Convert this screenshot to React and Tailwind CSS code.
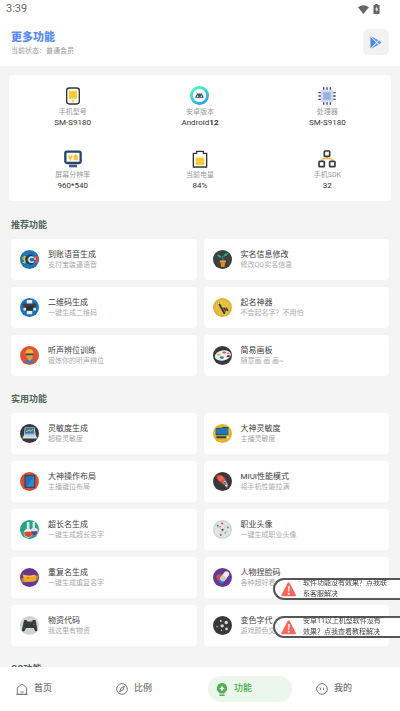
import { useState } from "react";

// Round 56x56 badge that every feature icon sits in
function Badge({ color, children }) {
  return (
    <svg viewBox="0 0 56 56" className="w-[19px] h-[19px] rounded-full shrink-0" aria-hidden="true">
      <rect width="56" height="56" fill={color} />
      {children}
    </svg>
  );
}

const icons = {
  voice: (
    <Badge color="#1f74b8">
      <path d="M18 21q-9-3-10 3 0 4 5 5t4 5q-2 4-9 2M13 17v23" fill="none" stroke="#e6c92f" strokeWidth="3" />
      <path d="M38 19a12 12 0 1 0 0 19" fill="none" stroke="#30343c" strokeWidth="5" />
      <path d="M40 23a8 8 0 1 0 0 11" fill="none" stroke="#e9eef2" strokeWidth="4" />
      <path d="M41 20l12-2v16l-4 8-4-8z" fill="#dd4a3b" />
      <path d="M41 23h6v6h-6z" fill="#f1b3a6" />
    </Badge>
  ),
  qrcode: (
    <Badge color="#1c73b9">
      <path d="M20 6h16v12H20z" fill="#e6eaec" />
      <path d="M9 16h38v18H9z" fill="#3c3f42" />
      <path d="M17 24h22v13H17z" fill="#2c2e31" />
      <path d="M10 29h8v8h-8zM39 29h8v8h-8z" fill="#dfe4e8" />
      <path d="M20 38h16v10H20z" fill="#e6eaec" />
    </Badge>
  ),
  listen: (
    <Badge color="#df5236">
      <path d="M17 50V43q3-7 11-7t12 7v7z" fill="#2d7fc1" />
      <path d="M19 22h19v10q-2 9-9 12-8-3-10-12z" fill="#e99a3c" />
      <path d="M16 23q0-14 12-14t12 14z" fill="#f0b32e" />
      <path d="M17 22h23v5H17z" fill="#2e4c5e" />
    </Badge>
  ),
  plant: (
    <Badge color="#3d4041">
      <path d="M29 35V18" stroke="#1fa081" strokeWidth="3" />
      <path d="M26 23q-11 1-14-9 12-1 14 9zM31 19q2-11 14-10-2 11-14 10z" fill="#22ab8b" />
      <path d="M20 31h18v6H20z" fill="#f5a62e" />
      <path d="M22 37h14l-2 13H24z" fill="#e7871f" />
    </Badge>
  ),
  naming: (
    <Badge color="#dfb433">
      <circle cx="28" cy="28" r="22" fill="#e6bf43" />
      <path d="M13 14l5-2 19 33-5 3z" fill="#35373b" />
      <path d="M13 14l5-2 2 5-5 2z" fill="#f0e6c3" />
      <path d="M31 28l7 11M38 29l6 9" stroke="#4b4633" strokeWidth="5" />
    </Badge>
  ),
  palette: (
    <Badge color="#37393c">
      <ellipse cx="29" cy="28" rx="24" ry="15" transform="rotate(-10 29 28)" fill="#eceff1" />
      <ellipse cx="17" cy="26" rx="6" ry="3" fill="#efaa2c" />
      <ellipse cx="33" cy="19" rx="6" ry="3" fill="#e2523d" />
      <ellipse cx="26" cy="34" rx="6" ry="4" fill="#2e86c6" />
      <ellipse cx="45" cy="30" rx="5" ry="3" fill="#323539" />
      <ellipse cx="45" cy="22" rx="4" ry="2" fill="#e2523d" />
    </Badge>
  ),
  laptop: (
    <Badge color="#35383c">
      <path d="M14 10h29l3 21H12z" fill="#dfe5e9" />
      <path d="M16 12h25l2 17H14z" fill="#2779bd" />
      <path d="M18 23l9-5 4 3 8-5" fill="none" stroke="#e4b13a" strokeWidth="3" />
      <path d="M12 31h34l5 12H7z" fill="#dde1e3" />
      <path d="M15 34h27l2 3H13z" fill="#bcc3c8" />
    </Badge>
  ),
  tablet: (
    <Badge color="#d94c32">
      <rect x="13" y="8" width="32" height="39" rx="3" fill="#35475a" />
      <path d="M17 12h24v31H17z" fill="#1f72b7" />
      <path d="M41 12v31H20z" fill="#2f89cd" />
    </Badge>
  ),
  flask: (
    <Badge color="#25a384">
      <path d="M20 6h8v25h-8zM37 6h7v22h-7z" fill="#dceee9" />
      <circle cx="24" cy="39" r="13" fill="#e8efed" />
      <circle cx="42" cy="34" r="11" fill="#d9e4e4" />
      <path d="M32 33h20q0 12-11 12-8-2-9-12z" fill="#6c3a94" />
      <path d="M12 37q12-6 24 1 0 12-12 12-12-1-12-13z" fill="#df4836" />
    </Badge>
  ),
  monitor: (
    <Badge color="#e0b42c">
      <path d="M27 9h18v6H27z" fill="#3c4652" />
      <path d="M8 12l37-2v23H8z" fill="#33495c" />
      <path d="M9 14l35-2v19L9 29z" fill="#1f78bd" />
      <path d="M10 36h29v6H10z" fill="#383c40" />
      <path d="M41 35h5v7h-5z" fill="#f2f2ea" />
    </Badge>
  ),
  rocket: (
    <Badge color="#36393b">
      <path d="M10 11q16-7 26 9l8 16-12 2-16-12q-7-8-6-15z" fill="#db4935" />
      <circle cx="23" cy="19" r="8" fill="#ef6450" />
      <path d="M30 30l6-5 8 15-7 2z" fill="#e8eef0" />
      <path d="M31 31l5-4 5 10-6 2z" fill="#2b80c2" />
      <path d="M36 41l8-2-2 8z" fill="#efb033" />
    </Badge>
  ),
  avatar: (
    <Badge color="#d0d3d3">
      <circle cx="28" cy="28" r="24" fill="#e2e4e4" />
      <path d="M12 20l16 10 14-16M28 30l-8 15M28 30l16 5" fill="none" stroke="#bcc4c7" strokeWidth="2" />
      <g fill="#d95140">
        <circle cx="23" cy="44" r="3" />
        <circle cx="27" cy="10" r="3" />
        <circle cx="21" cy="20" r="2" />
      </g>
      <g fill="#2e82c2">
        <circle cx="14" cy="17" r="3" />
        <circle cx="36" cy="38" r="2" />
      </g>
      <circle cx="44" cy="22" r="3" fill="#2ba98b" />
      <circle cx="28" cy="29" r="3" fill="#3d4144" />
    </Badge>
  ),
  ribbon: (
    <Badge color="#673792">
      <path d="M4 30h16v12H4zM36 22h17v12H36z" fill="#c77f22" />
      <path d="M9 19q17 7 33 1l6 3v14q-17 8-37 2z" fill="#e8a92c" />
      <path d="M9 19q17 7 33 1v5q-17 6-33 0z" fill="#f0c03b" />
      <path d="M22 26l6 3-6 4z" fill="#db5a37" />
    </Badge>
  ),
  gamepad: (
    <Badge color="#d0d3d3">
      <path d="M12 12h7l3 4h13l3-4h8l6 32q-7 5-12-9H18Q12 50 5 44z" fill="#3a3d40" />
      <circle cx="20" cy="28" r="4" fill="#2b2e30" />
      <circle cx="35" cy="28" r="4" fill="#2b2e30" />
      <circle cx="41" cy="25" r="2" fill="#dc4c3b" />
    </Badge>
  ),
  pills: (
    <Badge color="#673792">
      <g transform="rotate(58 22 32)">
        <rect x="8" y="24" width="28" height="16" rx="8" fill="#2b80c2" />
        <path d="M22 24h-6a8 8 0 0 0 0 16h6z" fill="#de4b36" />
      </g>
      <g transform="rotate(-52 34 25)">
        <rect x="19" y="17" width="32" height="16" rx="8" fill="#eceff1" />
        <path d="M35 17v16h-8a8 8 0 0 1 0-16z" fill="#c9ced3" />
      </g>
    </Badge>
  ),
  colors: (
    <Badge color="#37393b">
      <g fill="#d3d6d8">
        <circle cx="39" cy="19" r="5" />
        <circle cx="27" cy="29" r="5" />
        <circle cx="40" cy="38" r="4" />
        <circle cx="23" cy="15" r="3" />
        <circle cx="12" cy="31" r="2" />
        <circle cx="25" cy="42" r="2" />
      </g>
    </Badge>
  ),
  phone: (
    <svg viewBox="0 0 54 54" className="size-[18px]" aria-hidden="true">
      <rect x="8" y="3" width="38" height="48" rx="8" fill="none" stroke="#343434" strokeWidth="4" />
      <rect x="15" y="11" width="24" height="24" rx="2" fill="#ffc933" />
      <circle cx="27" cy="42" r="4" fill="#ffc933" />
    </svg>
  ),
  android: (
    <svg viewBox="0 0 54 54" className="size-[19px]" aria-hidden="true">
      <defs>
        <linearGradient id="ring" x1="0" y1="0" x2="0.6" y2="1">
          <stop offset="0.2" stopColor="#43efc4" />
          <stop offset="1" stopColor="#2aa7e6" />
        </linearGradient>
      </defs>
      <circle cx="27" cy="27" r="23" fill="none" stroke="url(#ring)" strokeWidth="8" />
      <path d="M16 33q1-11 11-11t11 11zM19 19l4 5M35 19l-4 5" fill="#3c5365" stroke="#3c5365" strokeWidth="2" />
      <circle cx="22" cy="29" r="2" fill="#fff" />
      <circle cx="32" cy="29" r="2" fill="#fff" />
    </svg>
  ),
  cpu: (
    <svg viewBox="0 0 54 54" className="size-[18px]" aria-hidden="true">
      <path d="M17 1v52M27 1v52M37 1v52M1 17h52M1 27h52M1 37h52" stroke="#41496b" strokeWidth="4" />
      <rect x="8" y="8" width="38" height="38" rx="4" fill="#cfdafb" />
      <rect x="16" y="16" width="22" height="22" fill="#9dafd6" />
    </svg>
  ),
  screen: (
    <svg viewBox="0 0 54 54" className="size-[18px]" aria-hidden="true">
      <rect x="4" y="5" width="46" height="34" rx="5" fill="#fff" stroke="#26466d" strokeWidth="7" />
      <path d="M14 16l5 12 5-12M40 17h-9v5h8v6h-10" fill="none" stroke="#ffc233" strokeWidth="5" />
      <path d="M15 44h24v8H15z" fill="#3f5d83" />
    </svg>
  ),
  battery: (
    <svg viewBox="0 0 54 54" className="size-[18px]" aria-hidden="true">
      <path d="M7 10h10V4h20v6h10v41H7z" fill="#fff" stroke="#343434" strokeWidth="4" strokeLinejoin="round" />
      <path d="M14 23h26v22H14z" fill="#ffc933" />
    </svg>
  ),
  sdk: (
    <svg viewBox="0 0 54 54" className="size-[18px]" aria-hidden="true">
      <path d="M11 33q0-7 8-7h16q8 0 8 7M27 20v7" fill="none" stroke="#ffb638" strokeWidth="4" />
      <g fill="#fff" stroke="#3a3a3a" strokeWidth="5">
        <rect x="19" y="3" width="16" height="16" rx="2" />
        <rect x="3" y="34" width="16" height="16" rx="2" />
        <rect x="35" y="34" width="16" height="16" rx="2" />
      </g>
    </svg>
  ),
  home: (
    <svg viewBox="0 0 36 36" className="size-3" fill="none" stroke="currentColor" strokeWidth="3" aria-hidden="true">
      <path d="M4 34V14L18 3l14 11v20zM1 34h34M13 27h10" />
    </svg>
  ),
  compass: (
    <svg viewBox="0 0 36 36" className="size-3" fill="none" stroke="currentColor" strokeWidth="3" aria-hidden="true">
      <circle cx="18" cy="18" r="16" />
      <path d="M25 10l-4 11-10 5 4-11z" />
    </svg>
  ),
  bulb: (
    <svg viewBox="0 0 36 40" className="w-3 h-[13px]" aria-hidden="true">
      <path d="M18 0a16 16 0 0 1 9 29l-2 3H11l-2-3A16 16 0 0 1 18 0zM10 35h16v5H10z" fill="currentColor" />
      <path d="M18 8l3 6 6 3-6 3-3 6-3-6-6-3 6-3z" fill="#fff" />
    </svg>
  ),
  face: (
    <svg viewBox="0 0 36 36" className="size-3" fill="none" stroke="currentColor" strokeWidth="3" aria-hidden="true">
      <circle cx="18" cy="18" r="16" />
      <path d="M13 14v7M23 14v7" />
    </svg>
  ),
};

const deviceInfo = [
  { icon: "phone", label: "手机型号", value: "SM-S9180" },
  { icon: "android", label: "安卓版本", value: <>Android<b>12</b></> },
  { icon: "cpu", label: "处理器", value: "SM-S9180" },
  { icon: "screen", label: "屏幕分辨率", value: "960*540" },
  { icon: "battery", label: "当前电量", value: "84%" },
  { icon: "sdk", label: "手机SDK", value: "32" },
];

const sections = [
  {
    title: "推荐功能",
    items: [
      { icon: "voice", name: "到账语音生成", desc: "支付宝装逼语音" },
      { icon: "plant", name: "实名信息修改", desc: "修改QQ实名信息" },
      { icon: "qrcode", name: "二维码生成", desc: "一键生成二维码" },
      { icon: "naming", name: "起名神器", desc: "不会起名字？不用怕" },
      { icon: "listen", name: "听声辨位训练", desc: "锻炼你的听声辨位" },
      { icon: "palette", name: "简易画板", desc: "随意画 画 画~" },
    ],
  },
  {
    title: "实用功能",
    items: [
      { icon: "laptop", name: "灵敏度生成", desc: "超稳灵敏度" },
      { icon: "monitor", name: "大神灵敏度", desc: "主播灵敏度" },
      { icon: "tablet", name: "大神操作布局", desc: "主播键位布局" },
      { icon: "rocket", name: "MIUI性能模式", desc: "将手机性能拉满" },
      { icon: "flask", name: "超长名生成", desc: "一键生成超长名字" },
      { icon: "avatar", name: "职业头像", desc: "一键生成职业头像" },
      { icon: "ribbon", name: "重复名生成", desc: "一键生成重复名字" },
      { icon: "pills", name: "人物捏脸码", desc: "各种超好看" },
      { icon: "gamepad", name: "物资代码", desc: "我这里有物资" },
      { icon: "colors", name: "变色字代", desc: "游戏颜色文" },
    ],
  },
  { title: "QQ功能", items: [] },
];

const tabs = [
  { id: "home", icon: "home", label: "首页" },
  { id: "scale", icon: "compass", label: "比例" },
  { id: "features", icon: "bulb", label: "功能" },
  { id: "mine", icon: "face", label: "我的" },
];

const notices = [
  ["软件功能没有效果？点我联", "系客服解决"],
  ["安卓11以上机型软件没有", "效果？点我查看教程解决"],
];

function StatusBar() {
  return (
    <div className="h-[18px] pl-[6px] pr-5 flex items-center justify-between text-[#666]">
      <span className="text-[11px] leading-[18px]">3:39</span>
      <div className="flex items-center gap-1">
        <svg viewBox="0 0 33 27" className="w-[11px] h-[9px]" aria-hidden="true">
          <path d="M0 7Q16-5 33 7L16 27z" fill="currentColor" />
        </svg>
        <svg viewBox="0 0 20 30" className="w-[7px] h-[10px]" aria-hidden="true">
          <path d="M6 0h8v3h5v27H1V3h5z" fill="currentColor" />
          <path d="M11 7l-5 10h4v8l5-11h-4z" fill="#fff" />
        </svg>
      </div>
    </div>
  );
}

function FeatureCard({ item }) {
  return (
    <button className="h-[41px] px-[9px] flex items-center gap-[9px] rounded bg-white text-left">
      {icons[item.icon]}
      <span className="flex flex-col">
        <span className="text-[8px] leading-[10px] text-[#3c3c3c]">{item.name}</span>
        <span className="text-[7px] leading-[10px] text-[#aaa]">{item.desc}</span>
      </span>
    </button>
  );
}

export default function App() {
  const [activeTab, setActiveTab] = useState("features");

  return (
    <div className="h-screen flex flex-col bg-[#f4f4f4] overflow-hidden font-[Roboto,'Noto_Sans_CJK_SC',sans-serif]">
      {/* Header */}
      <header className="bg-white shrink-0">
        <StatusBar />
        <div className="h-12 px-[11px] flex items-center justify-between">
          <div className="pt-1">
            <h1 className="text-[11px] leading-[14px] font-black text-[#5a8bfb]">更多功能</h1>
            <p className="text-[7px] leading-3 text-[#999]">当前状态：普通会员</p>
          </div>
          <button aria-label="Play" className="size-[26px] rounded-md bg-[#f2f2f2] flex items-center justify-center">
            <svg viewBox="0 0 36 40" className="w-3 h-[13px]" aria-hidden="true">
              <path d="M1 2v36l17-18z" fill="#4d82f3" />
              <path d="M3 1l17 17 6-5zM3 39l17-17 6 5z" fill="#5e92fa" />
              <path d="M28 14l7 6-7 6-6-6z" fill="#6a9bfb" />
            </svg>
          </button>
        </div>
      </header>

      {/* Main Content */}
      <main className="flex-1 min-h-0 overflow-y-auto [scrollbar-width:none] pt-[9px]">
        <section className="mx-[9px] mb-px grid grid-cols-3 rounded bg-white">
          {deviceInfo.map((info) => (
            <div key={info.label} className="h-[63px] pt-[11px] flex flex-col items-center">
              <div className="h-[19px] flex items-center">{icons[info.icon]}</div>
              <span className="mt-[2px] text-[7px] leading-[11px] text-[#999]">{info.label}</span>
              <span className="text-[8px] leading-[10px] text-[#333]">{info.value}</span>
            </div>
          ))}
        </section>

        {sections.map((section) => (
          <section key={section.title} className="px-[11px]">
            <h2 className="pt-[17px] pb-2 text-[9px] leading-3 font-bold text-[#4d6455]">{section.title}</h2>
            <div className="grid grid-cols-2 gap-[7px]">
              {section.items.map((item) => (
                <FeatureCard key={item.name} item={item} />
              ))}
            </div>
          </section>
        ))}
      </main>

      {/* Bottom navigation */}
      <nav className="h-11 pt-[9px] shrink-0 grid grid-cols-4 items-start bg-white">
        {tabs.map((tab) => (
          <button
            key={tab.id}
            onClick={() => setActiveTab(tab.id)}
            className={`mx-2 h-[26px] pl-2 flex items-center gap-[6px] rounded-full text-[9px] font-medium ${
              activeTab === tab.id ? "bg-[#ebf6ec] text-[#4caf50]" : "text-[#777]"
            }`}
          >
            {icons[tab.icon]}
            <span>{tab.label}</span>
          </button>
        ))}
      </nav>

      {/* Floating notices */}
      <div className="fixed right-0 bottom-[73px] flex flex-col gap-4">
        {notices.map((lines) => (
          <button
            key={lines[0]}
            className="w-[127px] h-[22px] pl-[6px] flex items-center gap-[6px] rounded-l-full border-2 border-r-0 border-[#555] bg-white text-left text-[7px] leading-[11px] text-[#444]"
          >
            <svg viewBox="0 0 48 45" className="w-4 h-[15px] shrink-0" aria-hidden="true">
              <path d="M23 4L4 40h38z" fill="#ff665c" stroke="#ff665c" strokeWidth="6" strokeLinejoin="round" />
              <path d="M21 13h5l-1 16h-3z" fill="#fff" />
              <circle cx="23" cy="35" r="3" fill="#fff" />
            </svg>
            <span className="whitespace-nowrap">
              {lines[0]}
              <br />
              {lines[1]}
            </span>
          </button>
        ))}
      </div>
    </div>
  );
}
